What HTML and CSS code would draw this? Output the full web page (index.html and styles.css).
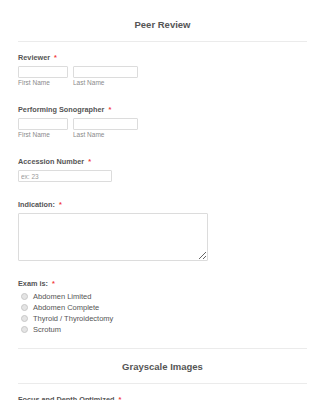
FILE: index.html
```html
<!DOCTYPE html>
<html lang="en">
<head>
  <meta charset="UTF-8">
  <meta name="viewport" content="width=device-width, initial-scale=1.0">
  <title>Peer Review</title>
  <link rel="stylesheet" href="styles.css">
</head>
<body>
  <div class="form">
    <div class="section-head">
      <h2>Peer Review</h2>
    </div>

    <div class="field">
      <label class="field-label">Reviewer <span class="req">*</span></label>
      <div class="name-row">
        <div class="name-part">
          <input type="text" class="first">
          <span class="sublabel">First Name</span>
        </div>
        <div class="name-part">
          <input type="text" class="last">
          <span class="sublabel">Last Name</span>
        </div>
      </div>
    </div>

    <div class="field">
      <label class="field-label">Performing Sonographer <span class="req">*</span></label>
      <div class="name-row">
        <div class="name-part">
          <input type="text" class="first">
          <span class="sublabel">First Name</span>
        </div>
        <div class="name-part">
          <input type="text" class="last">
          <span class="sublabel">Last Name</span>
        </div>
      </div>
    </div>

    <div class="field">
      <label class="field-label">Accession Number <span class="req">*</span></label>
      <input type="text" class="number" placeholder="ex: 23">
    </div>

    <div class="field">
      <label class="field-label">Indication: <span class="req">*</span></label>
      <textarea class="indication"></textarea>
    </div>

    <div class="field">
      <label class="field-label">Exam is: <span class="req">*</span></label>
      <div class="options">
        <label class="option"><span class="radio"></span>Abdomen Limited</label>
        <label class="option"><span class="radio"></span>Abdomen Complete</label>
        <label class="option"><span class="radio"></span>Thyroid / Thyroidectomy</label>
        <label class="option"><span class="radio"></span>Scrotum</label>
      </div>
    </div>

    <div class="section-head sub">
      <h2>Grayscale Images</h2>
    </div>

    <div class="field">
      <label class="field-label">Focus and Depth Optimized <span class="req">*</span></label>
    </div>
  </div>
</body>
</html>
```

FILE: styles.css
```css
body {
  margin: 0;
  background-color: #fff;
  font-family: "Liberation Sans", Arial, sans-serif;
  color: #555;
}

.form {
  padding: 0 18px;
}

.section-head {
  padding-top: 18px;
  padding-bottom: 9px;
  border-bottom: 1px solid #ebebeb;
  text-align: center;
}

.section-head h2 {
  margin: 0;
  font-size: 9.5px;
  line-height: 14px;
  font-weight: bold;
  color: #555;
}

.section-head.sub {
  border-top: 1px solid #ebebeb;
  margin-top: 7px;
  padding-top: 11px;
  padding-bottom: 9px;
}

.field {
  padding-top: 11px;
  padding-bottom: 7px;
}

.field-label {
  display: block;
  font-size: 7.3px;
  line-height: 9px;
  font-weight: bold;
  color: #555;
  margin-bottom: 4px;
}

.req {
  color: #f23a3c;
  margin-left: 2px;
}

.name-row {
  display: flex;
  gap: 5px;
}

.name-part {
  display: flex;
  flex-direction: column;
}

input,
textarea {
  box-sizing: border-box;
  border: 1px solid #dcdcdc;
  border-radius: 1px;
  background: #fff;
  margin: 0;
  padding: 0 2px;
  font-family: inherit;
  font-size: 6.5px;
  color: #555;
}

input {
  height: 12px;
}

input::placeholder {
  color: #999;
}

.first {
  width: 50px;
}

.last {
  width: 65px;
}

.number {
  width: 94px;
  display: block;
}

.sublabel {
  font-size: 6.5px;
  line-height: 9px;
  color: #8a8a8a;
}

.indication {
  display: block;
  width: 190px;
  height: 48px;
  resize: vertical;
}

.options {
  display: flex;
  flex-direction: column;
  gap: 2px;
  padding-left: 3px;
}

.option {
  display: flex;
  align-items: center;
  font-size: 7.5px;
  line-height: 9px;
  color: #555;
}

.radio {
  width: 5px;
  height: 5px;
  border-radius: 50%;
  border: 1px solid #c8c8c8;
  background: #e4e4e4;
  margin-right: 5px;
}
```
